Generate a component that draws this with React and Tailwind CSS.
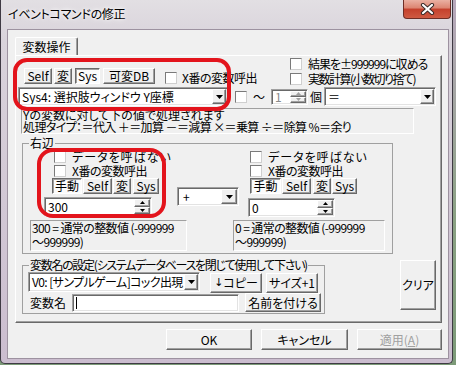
import React from "react";

const raised =
  "bg-[#f0f0f0] border border-t-white border-l-white border-r-[#696969] border-b-[#696969] shadow-[inset_-1px_-1px_0_#a0a0a0]";
const pressedCls =
  "bg-[#fbfbfb] border border-t-[#696969] border-l-[#696969] border-r-white border-b-white shadow-[inset_1px_1px_0_#a0a0a0]";
const sunken =
  "bg-white border border-t-[#a0a0a0] border-l-[#a0a0a0] border-r-white border-b-white shadow-[inset_1px_1px_0_#696969,inset_-1px_-1px_0_#e3e3e3]";
const descCls =
  "border border-t-[#a0a0a0] border-l-[#a0a0a0] border-r-white border-b-white bg-[#f0f0f0]";

function Cb({ className = "" }) {
  return (
    <div
      className={`w-[12px] h-[12px] shrink-0 bg-white border border-t-[#7a7a7a] border-l-[#7a7a7a] border-r-[#cfcfcf] border-b-[#cfcfcf] ${className}`}
    />
  );
}

function Btn({ className = "", children, pressed }) {
  return (
    <div
      className={`flex items-center justify-center shrink-0 whitespace-nowrap ${
        pressed ? pressedCls : raised
      } ${className}`}
    >
      {children}
    </div>
  );
}

function Tri() {
  return (
    <svg width="7" height="4" viewBox="0 0 7 4">
      <polygon points="0,0 7,0 3.5,4" fill="#000" />
    </svg>
  );
}

function Select({ className = "", children, btnW = "w-[14px]" }) {
  return (
    <div className={`${sunken} flex items-stretch p-[1px] shrink-0 ${className}`}>
      <div className="flex-1 flex items-center pl-[2px] whitespace-nowrap overflow-hidden">
        {children}
      </div>
      <div className={`${raised} ${btnW} flex items-center justify-center`}>
        <Tri />
      </div>
    </div>
  );
}

function Spin({ className = "", children, disabled }) {
  const fill = disabled ? "#a0a0a0" : "#000";
  return (
    <div
      className={`${sunken} flex items-stretch p-[1px] shrink-0 ${
        disabled ? "bg-[#f7f7f7]" : ""
      } ${className}`}
    >
      <div
        className={`flex-1 flex items-center pl-[2px] whitespace-nowrap ${
          disabled ? "text-[#8a8a8a]" : ""
        }`}
      >
        {children}
      </div>
      <div className="w-[16px] flex flex-col">
        <div className={`${raised} flex-1 flex items-center justify-center`}>
          <svg width="5" height="3" viewBox="0 0 5 3">
            <polygon points="0,3 5,3 2.5,0" fill={fill} />
          </svg>
        </div>
        <div className={`${raised} flex-1 flex items-center justify-center`}>
          <svg width="5" height="3" viewBox="0 0 5 3">
            <polygon points="0,0 5,0 2.5,3" fill={fill} />
          </svg>
        </div>
      </div>
    </div>
  );
}

function CbLine({ className = "", textCls = "", children }) {
  return (
    <div className={`flex items-center h-[12px] whitespace-nowrap ${className}`}>
      <Cb />
      <span className={`ml-[6px] ${textCls}`}>{children}</span>
    </div>
  );
}

export default function App() {
  return (
    <div className="relative w-[456px] h-[365px] overflow-hidden bg-[linear-gradient(180deg,#b9a9bd_0%,#8aa183_60%,#7c9a78_100%)] font-['Noto_Sans_CJK_JP',sans-serif] text-[12px] leading-[12px] text-black [font-feature-settings:'palt']">
      <div className="w-[453px] h-[364px] border-l border-r border-b border-[#3f3a44] rounded-b-[5px] bg-[linear-gradient(180deg,#e2dfe3_0px,#d9d3db_40px,#cbbdcf_100%)] flex flex-col">
        {/* title bar */}
        <div className="flex h-[29px] shrink-0">
          <div className="pl-[7px] pt-[8px] text-[12px] tracking-[-0.3px] [text-shadow:0_0_6px_#fff,0_0_3px_#fff]">
            イベントコマンドの修正
          </div>
          <div className="ml-auto mr-[1px] w-[48px] h-[19px] rounded-b-[4px] border border-t-0 border-[#6e2e26] bg-[linear-gradient(180deg,#eab0a2_0%,#dc8470_45%,#c4402c_50%,#cf5a42_100%)] flex items-center justify-center">
            <svg width="15" height="12" viewBox="0 0 15 12">
              <path d="M3 2 L12 10 M12 2 L3 10" stroke="#3a2a28" strokeWidth="4.2" strokeLinecap="round" />
              <path d="M3 2 L12 10 M12 2 L3 10" stroke="#fff" strokeWidth="2.2" strokeLinecap="round" />
            </svg>
          </div>
        </div>

        {/* client area */}
        <div className="ml-[6px] w-[442px] h-[330px] border border-[#9d92a0] bg-[#f0f0f0] flex flex-col">
          {/* tab */}
          <div className="ml-[7px] mt-[7px] w-[63px] h-[18px] border border-b-0 border-t-white border-l-white border-r-[#696969] shadow-[inset_-1px_0_0_#a0a0a0] rounded-t-[2px] flex items-center justify-center">
            変数操作
          </div>
          {/* tab panel */}
          <div className="ml-[7px] w-[427px] h-[268px] border border-t-white border-l-white border-r-[#696969] border-b-[#696969] shadow-[inset_-1px_-1px_0_#a0a0a0] flex flex-col">
            {/* row A */}
            <div className="flex h-[31px]">
              <div className="w-[274px] flex items-start pt-[12px] pl-[8px]">
                <Btn className="w-[28px] h-[16px]">Self</Btn>
                <Btn className="w-[18px] h-[16px] ml-[2px]">変</Btn>
                <Btn pressed className="w-[25px] h-[16px] ml-[3px]">Sys</Btn>
                <Btn className="w-[52px] h-[16px] ml-[3px]">可変DB</Btn>
                <div className="flex items-center h-[16px] ml-[10px] mt-[2px] whitespace-nowrap">
                  <Cb />
                  <span className="ml-[5px] tracking-[-0.5px]">X番の変数呼出</span>
                </div>
              </div>
              <div className="flex flex-col pt-[2px] gap-[3px]">
                <CbLine textCls="tracking-[-1px]">結果を±999999に収める</CbLine>
                <CbLine textCls="tracking-[-1.5px]">実数計算(小数切り捨て)</CbLine>
              </div>
            </div>
            {/* row B */}
            <div className="flex items-center h-[19px] pl-[2px]">
              <Select className="w-[210px] h-[19px]">Sys4: 選択肢ウィンドウ Y座標</Select>
              <Cb className="ml-[7px]" />
              <span className="ml-[6px]">～</span>
              <Spin className="ml-[6px] w-[37px] h-[16px]" disabled>
                1
              </Spin>
              <span className="ml-[2px]">個</span>
              <Select className="ml-[2px] w-[112px] h-[19px]">＝</Select>
            </div>
            {/* description */}
            <div className={`${descCls} mt-[2px] ml-[5px] w-[393px] h-[26px] pl-[1px] leading-[12px] whitespace-nowrap`}>
              <div>Yの変数に対して下の値で処理されます</div>
              <div className="tracking-[-0.6px]">処理タイプ：＝代入 ＋＝加算 －＝減算 ×＝乗算 ÷＝除算 %＝余り</div>
            </div>
            {/* right side group */}
            <fieldset className="mt-[3px] ml-[6px] w-[371px] min-w-0 border border-[#a0a0a0] pb-[2px]">
              <legend className="ml-[6px] px-[1px] leading-[12px]">右辺</legend>
              <div className="flex items-start pl-[21px]">
                <div className="flex flex-col w-[115px]">
                  <CbLine className="mt-[2px] ml-[10px]" textCls="tracking-[1px]">データを呼ばない</CbLine>
                  <CbLine className="mt-[2px] ml-[10px]" textCls="tracking-[-0.5px]">X番の変数呼出</CbLine>
                  <div className="flex mt-[1px] ml-[8px]">
                    <Btn pressed className="w-[30px] h-[16px]">手動</Btn>
                    <Btn className="ml-[1px] w-[29px] h-[16px]">Self</Btn>
                    <Btn className="ml-[1px] w-[18px] h-[16px]">変</Btn>
                    <Btn className="ml-[2px] w-[26px] h-[16px]">Sys</Btn>
                  </div>
                  <Spin className="mt-[3px] w-[108px] h-[19px]">300</Spin>
                </div>
                <Select className="ml-[18px] mt-[38px] w-[62px] h-[19px]" btnW="w-[16px]">
                  <span className="pl-[2px]">+</span>
                </Select>
                <div className="flex flex-col ml-[9px]">
                  <CbLine className="mt-[2px] ml-[2px]" textCls="tracking-[1px]">データを呼ばない</CbLine>
                  <CbLine className="mt-[2px] ml-[2px]" textCls="tracking-[-0.5px]">X番の変数呼出</CbLine>
                  <div className="flex mt-[1px] ml-[2px]">
                    <Btn pressed className="w-[31px] h-[16px]">手動</Btn>
                    <Btn className="ml-[1px] w-[29px] h-[16px]">Self</Btn>
                    <Btn className="ml-[2px] w-[18px] h-[16px]">変</Btn>
                    <Btn className="ml-[1px] w-[25px] h-[16px]">Sys</Btn>
                  </div>
                  <Spin className="mt-[4px] w-[87px] h-[19px]">0</Spin>
                </div>
              </div>
              <div className="flex mt-[3px] pl-[7px]">
                <div className={`${descCls} w-[157px] h-[31px] pl-[1px] leading-[14px] tracking-[-0.6px] whitespace-nowrap overflow-hidden`}>
                  300 = 通常の整数値 (-999999
                  <br />
                  ～999999)
                </div>
                <div className={`${descCls} ml-[46px] w-[152px] h-[31px] pl-[1px] leading-[14px] tracking-[-0.6px] whitespace-nowrap overflow-hidden`}>
                  0 = 通常の整数値 (-999999
                  <br />
                  ～999999)
                </div>
              </div>
            </fieldset>
            {/* variable name group + clear */}
            <div className="flex items-start mt-[5px]">
              <fieldset className="ml-[6px] w-[303px] min-w-0 shrink-0 border border-[#a0a0a0] pb-[1px]">
                <legend className="ml-[6px] px-[1px] leading-[12px] whitespace-nowrap tracking-[-1.3px]">
                  変数名の設定(システムデータベースを閉じて使用して下さい)
                </legend>
                <div className="flex items-start mt-[1px] pl-[5px]">
                  <Select className="w-[172px] h-[20px]">
                    <span className="tracking-[-0.6px]">V0: [サンプルゲーム]コック出現</span>
                  </Select>
                  <Btn className="ml-[10px] mt-[1px] w-[52px] h-[20px]">
                    <span className="font-['DejaVu_Sans'] text-[11px]">↓</span>コピー
                  </Btn>
                  <Btn className="ml-[4px] mt-[1px] w-[52px] h-[20px]">サイズ+1</Btn>
                </div>
                <div className="flex items-center pl-[7px] h-[19px]">
                  <span>変数名</span>
                  <div className={`${sunken} ml-[6px] w-[167px] h-[18px] flex items-center`}>
                    <div className="ml-[3px] w-px h-[12px] bg-black" />
                  </div>
                  <Btn className="ml-[6px] w-[76px] h-[19px]">名前を付ける</Btn>
                </div>
              </fieldset>
              <Btn className="ml-[75px] mt-[1px] w-[36px] h-[50px]">クリア</Btn>
            </div>
          </div>
          {/* dialog buttons */}
          <div className="flex justify-end pr-[6px] mt-[6px]">
            <Btn className="w-[86px] h-[21px]">OK</Btn>
            <Btn className="ml-[9px] w-[87px] h-[21px]">キャンセル</Btn>
            <Btn className="ml-[9px] w-[85px] h-[21px] text-[#a0a0a0]">
              適用(<span className="underline">A</span>)
            </Btn>
          </div>
        </div>
      </div>

      {/* red annotation ovals */}
      <div className="absolute left-[13px] top-[58px] w-[218px] h-[53px] border-[4px] border-[#e3141c] rounded-[14px]" />
      <div className="absolute left-[37px] top-[148px] w-[129px] h-[70px] border-[4px] border-[#e3141c] rounded-[16px]" />
    </div>
  );
}
